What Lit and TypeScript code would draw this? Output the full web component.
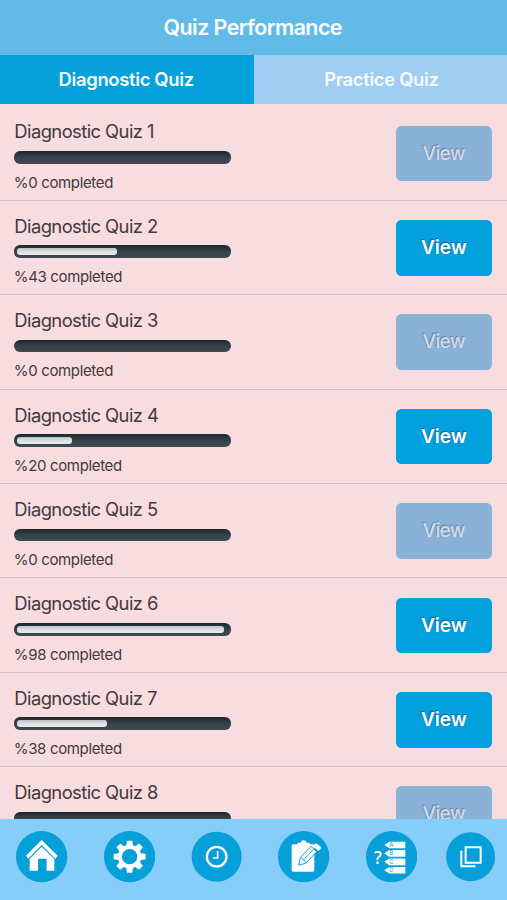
import { LitElement, html, svg, css } from "lit";
import { customElement, property } from "lit/decorators.js";
import { classMap } from "lit/directives/class-map.js";

interface Quiz {
  name: string;
  percent: number;
  fill: number;
}

// fill: width of the progress indicator inside its track, in pixels
const quizzes: Quiz[] = [
  { name: "Diagnostic Quiz 1", percent: 0, fill: 0 },
  { name: "Diagnostic Quiz 2", percent: 43, fill: 100 },
  { name: "Diagnostic Quiz 3", percent: 0, fill: 0 },
  { name: "Diagnostic Quiz 4", percent: 20, fill: 55 },
  { name: "Diagnostic Quiz 5", percent: 0, fill: 0 },
  { name: "Diagnostic Quiz 6", percent: 98, fill: 207.5 },
  { name: "Diagnostic Quiz 7", percent: 38, fill: 90 },
  { name: "Diagnostic Quiz 8", percent: 0, fill: 0 },
];

@customElement("quiz-row")
class QuizRow extends LitElement {
  @property({ attribute: false }) quiz!: Quiz;

  static styles = css`
    :host {
      display: flex;
      justify-content: space-between;
      box-sizing: border-box;
      height: 94.4px;
      flex: none;
      padding: 0 15.5px 0 14.3px;
      border-bottom: 1px solid #d6bfc5;
      color: #44393d;
    }
    .name {
      margin-top: 13px;
      height: 24px;
      line-height: 24px;
      font-size: 18.4px;
      letter-spacing: -0.57px;
      white-space: nowrap;
    }
    .track {
      box-sizing: border-box;
      width: 216.7px;
      height: 12.6px;
      margin-top: 7.6px;
      padding: 2.8px 2.7px;
      border-radius: 6px;
      background: linear-gradient(#1c262e, #36424a 50%, #3f4b52);
    }
    .fill {
      height: 7.2px;
      border-radius: 3px;
      background: linear-gradient(#bfc1c1, #dcdfde 50%, #e5ebe9);
    }
    .done {
      margin-top: 9px;
      height: 20px;
      line-height: 20px;
      font-size: 15px;
      letter-spacing: -0.35px;
      text-indent: -0.5px;
      white-space: nowrap;
    }
    .view {
      width: 95.5px;
      height: 55.5px;
      margin-top: 19.3px;
      border-radius: 5.5px;
      background: #02a1dd;
      color: #fff;
      font-size: 19px;
      font-weight: 600;
      line-height: 55px;
      text-align: center;
      text-shadow: -0.7px -0.7px 1px rgba(20, 60, 90, 0.6);
    }
    .off {
      background: #8ab2d9;
      color: #d2d9e1;
      font-weight: 500;
      letter-spacing: -0.6px;
      text-shadow: -0.7px -0.7px 1px rgba(60, 80, 110, 0.5);
    }
  `;

  render() {
    const q = this.quiz;
    return html`
      <div>
        <div class="name">${q.name}</div>
        <div class="track">
          ${q.fill ? html`<div class="fill" style="width:${q.fill}px"></div>` : ""}
        </div>
        <div class="done">%${q.percent} completed</div>
      </div>
      <div class=${classMap({ view: true, off: q.percent === 0 })}>View</div>
    `;
  }
}

const blue = "#069fd9";

const home = svg`
  <path fill="#fff" d="M0-50 48-3 41 6 0-35-40 6-47-3Z"/>
  <path fill="#fff" d="M0-30 38 7V42H15V6H-11V42H-36V7Z"/>`;

const gear = svg`
  ${[0, 45, 90, 135].map(
    (a) => svg`<path fill="#fff" transform="rotate(${a})" d="M-10-34-8-48H8L10-34V34L8 48H-8L-10 34Z"/>`
  )}
  <circle r="35" fill="#fff"/>
  <circle r="23" fill=${blue}/>`;

const clock = svg`
  <circle r="29.5" fill="none" stroke="#fff" stroke-width="7"/>
  <path fill="none" stroke="#fff" stroke-width="5" d="M3-17V4H-11"/>`;

const clipboard = svg`
  <path fill="#fff" d="M-31-37H-18V-42H-9Q-7-49 0-49 7-49 9-42H18V-37H27Q32-37 32-32V40Q32 45 27 45H-31Q-36 45-36 40V-32Q-36-37-31-37Z"/>
  <path fill="#fff" stroke="${blue}" stroke-width="3" stroke-linejoin="round" d="M-15 26-10 3 22-31 39-15 8 19Z"/>
  <path fill="none" stroke="${blue}" stroke-width="2.5" d="M-10 3Q-2 3-1 10 7 11 8 19M-1 10 31-23"/>
  <path fill="#fff" d="M27-33 34-39Q37-41 40-39L51-30Q53-27 51-24L44-17Z"/>`;

const questions = svg`
  <text class="q" x="-41" y="22">?</text>
  ${["A", "B", "C", "D"].map(
    (c, i) => svg`
      <path fill="#fff" transform="translate(0 ${i * 25.3 - 45})" d="M-22 10-7 0H41V20H-7Z"/>
      <text class="l" x="-1" y=${i * 25.3 - 29.5}>${c}</text>`
  )}`;

const copies = svg`
  <path fill="none" stroke="#fff" stroke-width="6" d="M-15-28H30V18H-15ZM-28-18V29H14"/>`;

const tools = [
  { icon: home, r: 77 },
  { icon: gear, r: 77 },
  { icon: clock, r: 75 },
  { icon: clipboard, r: 77 },
  { icon: questions, r: 77 },
  { icon: copies, r: 73.5 },
];

@customElement("app-root")
class AppRoot extends LitElement {
  static styles = css`
    :host {
      display: flex;
      flex-direction: column;
      height: 900px;
      overflow: hidden;
      background: #f7dce0;
      font-family: Inter, "Liberation Sans", sans-serif;
    }
    .header {
      flex: none;
      height: 55px;
      line-height: 54px;
      padding-right: 1.5px;
      background: #62bbe7;
      color: #f8fdff;
      font-size: 21.4px;
      font-weight: 600;
      letter-spacing: -0.55px;
      text-align: center;
    }
    .tabs {
      flex: none;
      display: grid;
      grid-template-columns: 254.3px 1fr;
      height: 48.4px;
      line-height: 49px;
      border-bottom: 1px solid #d9d9ec;
      color: #f5fbff;
      font-size: 18.4px;
      font-weight: 600;
      letter-spacing: -0.32px;
      text-align: center;
    }
    .active {
      background: #06a0dc;
      padding-right: 2px;
    }
    .idle {
      background: #9fcef2;
      padding-left: 1.5px;
    }
    .list {
      flex: 1;
      min-height: 0;
      overflow: hidden;
      display: flex;
      flex-direction: column;
      padding-top: 2px;
    }
    .nav {
      flex: none;
      box-sizing: border-box;
      height: 81px;
      padding: 12.3px 0 0 16.3px;
      display: grid;
      grid-template-columns: 87.6px 87.1px 87.5px 87.2px 78.9px 52px;
      background: #87cdfa;
    }
    svg {
      display: block;
      width: 51.3px;
      height: 51.3px;
    }
    .q {
      fill: #fff;
      font-family: "Open Sans", "Noto Sans", sans-serif;
      font-size: 52px;
      font-weight: 600;
      text-anchor: middle;
    }
    .l {
      fill: #069fd9;
      font-size: 18px;
      text-anchor: middle;
    }
  `;

  render() {
    return html`
      <div class="header">Quiz Performance</div>
      <div class="tabs">
        <div class="active">Diagnostic Quiz</div>
        <div class="idle">Practice Quiz</div>
      </div>
      <div class="list">${quizzes.map((q) => html`<quiz-row .quiz=${q}></quiz-row>`)}</div>
      <div class="nav">
        ${tools.map(
          (t) => html`<svg viewBox="-77 -77 154 154"><circle r=${t.r} fill=${blue} />${t.icon}</svg>`
        )}
      </div>
    `;
  }
}
